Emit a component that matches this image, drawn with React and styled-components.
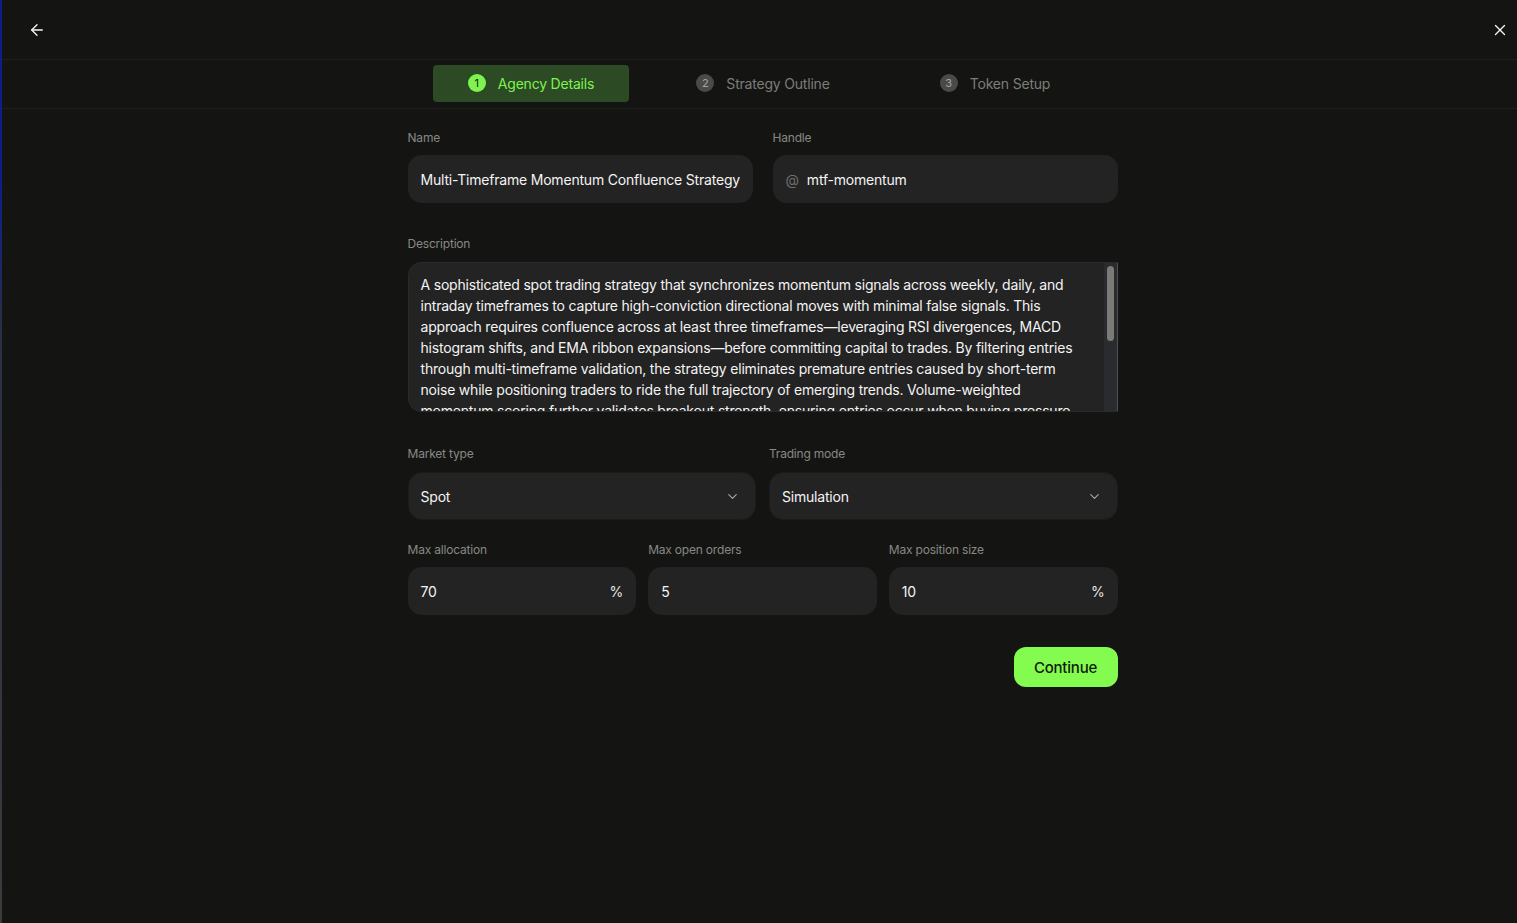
import React from "react"
import styled, { createGlobalStyle } from "styled-components"
import { ArrowLeft, X, ChevronDown } from "lucide-react"

const GlobalStyle = createGlobalStyle`
  html, body {
    margin: 0;
    padding: 0;
    background: #141513;
    font-family: Inter, "Noto Sans", sans-serif;
    color: #f2f2f2;
  }
  * { box-sizing: border-box; }
`

const Page = styled.div`
  min-height: 923px;
  background: #141513;
  border-left: 2px solid;
  border-image: linear-gradient(to bottom, #0b1f8a 0%, #0b1f8a 20%, #2a2f45 36%, #3a3b3d 100%) 1;
  letter-spacing: -0.2px;
`

const Header = styled.header`
  height: 60px;
  display: flex;
  align-items: center;
  justify-content: space-between;
  padding: 0 8px 0 26px;
  border-bottom: 1px solid #1f201e;
`

const IconButton = styled.button`
  background: none;
  border: none;
  padding: 0;
  color: #f5f5f5;
  display: flex;
  align-items: center;
  cursor: pointer;
`

const StepBar = styled.nav`
  height: 49px;
  display: flex;
  justify-content: center;
  align-items: center;
  border-bottom: 1px solid #1f201e;
`

const StepGrid = styled.div`
  display: grid;
  grid-template-columns: repeat(3, 196px);
  column-gap: 36px;
  margin-left: 7px;
  margin-top: -2px;
`

const Step = styled.div`
  height: 37px;
  border-radius: 4px;
  display: flex;
  align-items: center;
  justify-content: center;
  gap: 12px;
  font-size: 14px;
  background: ${(p) => (p.$active ? "#2c4a24" : "transparent")};
  color: ${(p) => (p.$active ? "#7ef34f" : "#7c7d7a")};
`

const StepNum = styled.span`
  width: 18px;
  height: 18px;
  border-radius: 50%;
  display: flex;
  align-items: center;
  justify-content: center;
  font-size: 11px;
  letter-spacing: 0;
  background: ${(p) => (p.$active ? "#7ef34f" : "#4a4b49")};
  color: ${(p) => (p.$active ? "#12200c" : "#a5a6a3")};
`

const Form = styled.main`
  width: 710px;
  padding-top: 21px;
  margin-left: calc(50% - 352px);
`

const Row = styled.div`
  display: grid;
  grid-template-columns: ${(p) => p.$cols};
  column-gap: ${(p) => p.$gap}px;
  margin-bottom: ${(p) => p.$mb}px;
`

const Field = styled.div`
  display: flex;
  flex-direction: column;
  min-width: 0;
`

const Label = styled.label`
  font-size: 12px;
  line-height: 15px;
  color: #878885;
  margin-bottom: ${(p) => p.$mb || 10}px;
`

const InputBox = styled.div`
  height: 48px;
  border-radius: 14px;
  background: #232323;
  display: flex;
  align-items: center;
  padding: 0 13px;
  font-size: 14px;
  color: #f4f4f4;
  gap: 8px;
  white-space: nowrap;
  overflow: hidden;
`

const SelectBox = styled(InputBox)`
  border: 1px solid #1c1c1c;
  justify-content: space-between;
  padding: 0 15px 0 12px;
`

const Value = styled.span`
  flex: 1;
`

const Affix = styled.span`
  color: #6e6f6c;
  font-size: 14px;
`

const Suffix = styled.span`
  color: #e6e6e6;
  font-size: 14px;
`

const TextBox = styled.div`
  height: 150px;
  display: flex;
  border: 1px solid #2a2a2a;
  border-right: none;
  border-radius: 14px 0 0 14px;
  background: #232323;
  overflow: hidden;
`

const TextContent = styled.div`
  flex: 1;
  padding: 11px 20px 11px 12px;
  font-size: 14px;
  line-height: 21px;
  color: #f4f4f4;
  overflow: hidden;
`

const ScrollTrack = styled.div`
  width: 15px;
  flex: none;
  background: #2a2b2e;
  border-left: 1px solid #222326;
  border-right: 1px solid #4f5052;
  padding: 3px 3px 0 3px;
`

const ScrollThumb = styled.div`
  height: 75px;
  border-radius: 4px;
  background: #7a7b77;
`

const Actions = styled.div`
  display: flex;
  justify-content: flex-end;
`

const Primary = styled.button`
  height: 40px;
  width: 104px;
  border: none;
  border-radius: 12px;
  background: #84fc4f;
  color: #0f1a0b;
  font-family: Inter, "Noto Sans", sans-serif;
  font-size: 15px;
  font-weight: 500;
  letter-spacing: -0.2px;
  cursor: pointer;
`

const description =
  "A sophisticated spot trading strategy that synchronizes momentum signals across weekly, daily, and intraday timeframes to capture high-conviction directional moves with minimal false signals. This approach requires confluence across at least three timeframes\u2014leveraging RSI divergences, MACD histogram shifts, and EMA ribbon expansions\u2014before committing capital to trades. By filtering entries through multi-timeframe validation, the strategy eliminates premature entries caused by short-term noise while positioning traders to ride the full trajectory of emerging trends. Volume-weighted momentum scoring further validates breakout strength, ensuring entries occur when buying pressure is sustained across sessions rather than driven by isolated spikes. Risk is managed through dynamic position sizing and trailing exits aligned to the higher-timeframe structure."

const steps = ["Agency Details", "Strategy Outline", "Token Setup"]

export default function App() {
  return (
    <Page>
      <GlobalStyle />
      <Header>
        <IconButton aria-label="Back">
          <ArrowLeft size={18} strokeWidth={1.8} />
        </IconButton>
        <IconButton aria-label="Close">
          <X size={18} strokeWidth={1.8} />
        </IconButton>
      </Header>

      <StepBar>
        <StepGrid>
          {steps.map((s, i) => (
            <Step key={s} $active={i === 0}>
              <StepNum $active={i === 0}>{i + 1}</StepNum>
              {s}
            </Step>
          ))}
        </StepGrid>
      </StepBar>

      <Form>
        <Row $cols="1fr 1fr" $gap={20} $mb={33}>
          <Field>
            <Label>Name</Label>
            <InputBox>Multi-Timeframe Momentum Confluence Strategy</InputBox>
          </Field>
          <Field>
            <Label>Handle</Label>
            <InputBox>
              <Affix>@</Affix>
              mtf-momentum
            </InputBox>
          </Field>
        </Row>

        <Row $cols="1fr" $gap={0} $mb={34}>
          <Field>
            <Label $mb={11}>Description</Label>
            <TextBox>
              <TextContent>{description}</TextContent>
              <ScrollTrack>
                <ScrollThumb />
              </ScrollTrack>
            </TextBox>
          </Field>
        </Row>

        <Row $cols="1fr 1fr" $gap={13} $mb={22}>
          <Field>
            <Label $mb={11}>Market type</Label>
            <SelectBox>
              <Value>Spot</Value>
              <ChevronDown size={15} color="#a9aaa7" strokeWidth={1.8} />
            </SelectBox>
          </Field>
          <Field>
            <Label $mb={11}>Trading mode</Label>
            <SelectBox>
              <Value>Simulation</Value>
              <ChevronDown size={15} color="#a9aaa7" strokeWidth={1.8} />
            </SelectBox>
          </Field>
        </Row>

        <Row $cols="1fr 1fr 1fr" $gap={12} $mb={32}>
          <Field>
            <Label>Max allocation</Label>
            <InputBox>
              <Value>70</Value>
              <Suffix>%</Suffix>
            </InputBox>
          </Field>
          <Field>
            <Label>Max open orders</Label>
            <InputBox>
              <Value>5</Value>
            </InputBox>
          </Field>
          <Field>
            <Label>Max position size</Label>
            <InputBox>
              <Value>10</Value>
              <Suffix>%</Suffix>
            </InputBox>
          </Field>
        </Row>

        <Actions>
          <Primary>Continue</Primary>
        </Actions>
      </Form>
    </Page>
  )
}
